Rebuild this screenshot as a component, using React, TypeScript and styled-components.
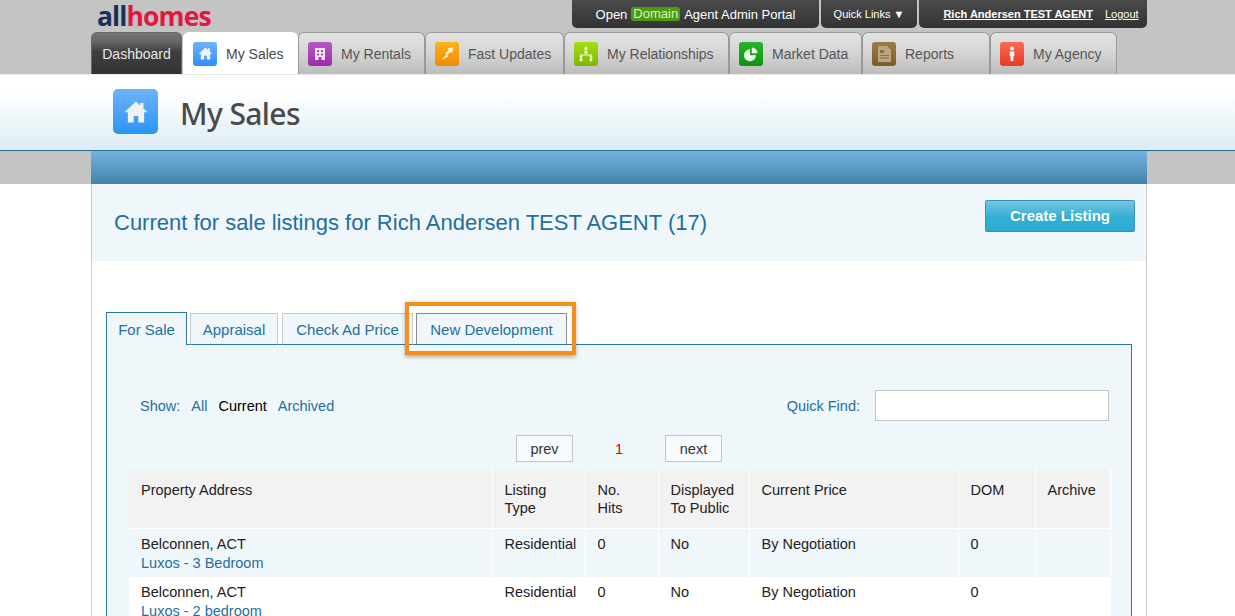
// App.tsx
import React from "react";
import styled, { createGlobalStyle } from "styled-components";

const GlobalStyle = createGlobalStyle`
  html, body {
    margin: 0;
    padding: 0;
    height: 616px;
    overflow: hidden;
    background: #fff;
    font-family: "Liberation Sans", Arial, sans-serif;
  }
  * { box-sizing: border-box; }
`;

const TopBand = styled.div`
  background: #c4c4c4;
  height: 75px;
  padding-left: 91px;
  border-bottom: 1px solid #eaeaea;
`;

const Shell = styled.div`
  width: 1056px;
`;

const TopRow = styled.div`
  display: flex;
  justify-content: space-between;
  height: 32px;
`;

const Logo = styled.div`
  margin-left: 6px;
  font-family: "Open Sans", sans-serif;
  font-weight: 700;
  font-size: 26.5px;
  line-height: 33px;
  letter-spacing: -0.9px;
  color: #e3173e;
  span {
    color: #1c2f5c;
  }
`;

const TopBars = styled.div`
  display: flex;
  gap: 2px;
  height: 28px;
`;

const TopBar = styled.div<{ $width: number }>`
  width: ${(p) => p.$width}px;
  display: flex;
  align-items: center;
  justify-content: center;
  gap: 4px;
  color: #fff;
  font-size: 13px;
  background: linear-gradient(#4a4a4a, #333);
  border-radius: 0 0 5px 5px;
  white-space: nowrap;
`;

const DomainMark = styled.span`
  background: #4f9a13;
  color: #d8f5b8;
  padding: 0 2px;
  border-radius: 3px;
  line-height: 14px;
`;

const UserName = styled.a`
  font-size: 11px;
  font-weight: 700;
  color: #fff;
  text-decoration: underline;
  margin-left: 16px;
`;

const Logout = styled.a`
  font-size: 11px;
  color: #fff;
  text-decoration: underline;
  margin-left: 8px;
`;

const NavRow = styled.nav`
  display: flex;
  height: 42px;
`;

const NavTab = styled.a<{ $width: number; $variant?: "dark" | "active" }>`
  width: ${(p) => p.$width}px;
  display: flex;
  align-items: center;
  justify-content: ${(p) => (p.$variant === "dark" ? "center" : "flex-start")};
  gap: 9px;
  padding-left: ${(p) => (p.$variant === "dark" ? 0 : 9)}px;
  font-size: 14px;
  border-radius: 6px 6px 0 0;
  color: ${(p) => (p.$variant === "dark" ? "#e8e8e8" : p.$variant === "active" ? "#4a4a4a" : "#555")};
  border: 1px solid ${(p) => (p.$variant === "dark" ? "#666" : p.$variant === "active" ? "#fff" : "#9a9a9a")};
  border-bottom: none;
  margin-right: ${(p) => (p.$variant === "dark" ? 1 : 0)}px;
  background: ${(p) =>
    p.$variant === "dark"
      ? "linear-gradient(#747474, #666 22%, #3f3f3f 45%, #333)"
      : p.$variant === "active"
        ? "#fff"
        : "linear-gradient(#e3e3e3, #d6d6d6 45%, #bdbdbd)"};
`;

const IconTile = styled.span<{ $from: string; $to: string; $size?: number }>`
  flex: none;
  display: flex;
  align-items: center;
  justify-content: center;
  width: ${(p) => p.$size ?? 24}px;
  height: ${(p) => p.$size ?? 24}px;
  border-radius: ${(p) => ((p.$size ?? 24) > 30 ? 5 : 3)}px;
  background: linear-gradient(${(p) => p.$from}, ${(p) => p.$to});
`;

const HomeIcon = ({ size }: { size: number }) => (
  <svg width={size} height={size} viewBox="0 0 16 16" fill="#f1f1f1">
    <path d="M8 1.5 0.8 8.2h2.2V14.5h3.6v-4h2.8v4H13V8.2h2.2L12.6 5.8V2.5h-2v1.5z" />
  </svg>
);

const Header = styled.header`
  height: 76px;
  padding: 14px 0 0 113px;
  display: flex;
  gap: 22px;
  background: linear-gradient(#fff 25%, #dcebf5);
  border-bottom: 1px solid #256a9c;
`;

const PageHeading = styled.h1`
  margin: 0;
  font-family: "Noto Sans", sans-serif;
  font-size: 30px;
  line-height: 50px;
  font-weight: 500;
  letter-spacing: -0.6px;
  color: #4a4a4a;
`;

const BlueBand = styled.div`
  background: #c4c4c4;
  height: 33px;
  padding-left: 91px;
`;

const BlueStrip = styled(Shell)`
  height: 33px;
  background: linear-gradient(#74b3dc, #4283ac);
`;

const Card = styled(Shell)`
  margin-left: 91px;
  border: solid #ccc;
  border-width: 0 1px;
  height: 432px;
  overflow: hidden;
`;

const CardHead = styled.div`
  height: 77px;
  background: #f0f7fb;
  display: flex;
  align-items: center;
  justify-content: space-between;
  padding: 11px 11px 11px 22px;
`;

const CardTitle = styled.h2`
  margin: 0;
  font-size: 22px;
  font-weight: 400;
  color: #1f6f9f;
  white-space: nowrap;
`;

const CreateButton = styled.button`
  width: 150px;
  height: 32px;
  margin-top: -14px;
  border: 1px solid #3b8fc6;
  border-radius: 2px;
  background: linear-gradient(#78c6e0, #2fb0d3 55%, #2cadd1);
  color: #fff;
  font-family: inherit;
  font-size: 15px;
  font-weight: 700;
`;

const CardBody = styled.div`
  padding: 51px 14px 0;
`;

const TabsRow = styled.div`
  display: flex;
  align-items: flex-end;
  height: 33px;
  position: relative;
  z-index: 1;
`;

const ListTab = styled.a<{ $width: number; $gap?: number; $tone?: "active" | "hint" }>`
  width: ${(p) => p.$width}px;
  margin-right: ${(p) => p.$gap ?? 0}px;
  height: ${(p) => (p.$tone === "active" ? 33 : 32)}px;
  display: flex;
  align-items: center;
  justify-content: center;
  font-size: 15px;
  color: #1f6f9f;
  background: #f0f7fb;
  white-space: nowrap;
  border: 1px solid ${(p) => (p.$tone === "active" ? "#2a76a8" : p.$tone === "hint" ? "#8c8c8c" : "#c9c9c9")};
  border-bottom: ${(p) => (p.$tone === "active" ? "none" : "1px solid #2a76a8")};
`;

const Highlighted = styled.div`
  position: relative;
  display: flex;
`;

const OrangeBox = styled.span`
  position: absolute;
  left: -11px;
  right: -9px;
  top: -11px;
  bottom: -10px;
  border: 4px solid #f78d1a;
  box-shadow: 0 2px 4px rgba(0, 0, 0, 0.3);
  pointer-events: none;
`;

const Panel = styled.section`
  margin-top: -1px;
  height: 400px;
  background: #f0f7fb;
  border: 1px solid #2a76a8;
  padding: 45px 22px 0;
`;

const ShowRow = styled.div`
  display: flex;
  align-items: center;
  justify-content: space-between;
  height: 31px;
  padding-left: 11px;
`;

const ShowLinks = styled.div`
  display: flex;
  gap: 11px;
  font-size: 14.5px;
  color: #1f6f9f;
`;

const ShowLabel = styled.span`
  margin-right: 0;
`;

const ShowCurrent = styled.span`
  color: #000;
`;

const QuickFind = styled.label`
  display: flex;
  align-items: center;
  gap: 15px;
  font-size: 14.5px;
  color: #1f6f9f;
`;

const QuickInput = styled.input`
  width: 234px;
  height: 31px;
  border: 1px solid #c4c4c4;
  background: #fff;
`;

const Pager = styled.div`
  display: flex;
  justify-content: center;
  align-items: center;
  margin-top: 14px;
  height: 27px;
`;

const PagerButton = styled.a`
  width: 57px;
  height: 27px;
  display: flex;
  align-items: center;
  justify-content: center;
  border: 1px solid #c4c4c4;
  background: #f7fbfd;
  font-size: 14.5px;
  color: #333;
`;

const PageNumber = styled.span`
  width: 92px;
  text-align: center;
  font-size: 14.5px;
  color: #d80000;
`;

const Table = styled.table`
  width: 981px;
  margin-top: 7px;
  table-layout: fixed;
  border-collapse: collapse;
  font-size: 14.5px;
  color: #222;
`;

const HeadCell = styled.th`
  height: 59px;
  padding: 12px 11px 0 12px;
  vertical-align: top;
  text-align: left;
  font-weight: 400;
  line-height: 18px;
  background: #f2f2f2;
  border: 1px solid #fff;
  border-width: 0 1px 1px 0;
`;

const Row = styled.tr<{ $shaded?: boolean }>`
  background: ${(p) => (p.$shaded ? "#f0f7fb" : "#fff")};
`;

const Cell = styled.td`
  height: 49px;
  padding: 6px 5px 0 12px;
  vertical-align: top;
  line-height: 19px;
  border: 1px solid #fff;
  border-width: 0 1px 0 0;
  white-space: nowrap;
`;

const ProjectLink = styled.a`
  display: block;
  color: #1f6f9f;
`;

const columns = [363, 93, 73, 91, 209, 77, 75];
const heads: React.ReactNode[] = [
  "Property Address",
  <>Listing<br />Type</>,
  <>No.<br />Hits</>,
  <>Displayed<br />To Public</>,
  "Current Price",
  "DOM",
  "Archive",
];

const rows = [
  { project: "Luxos - 3 Bedroom", shaded: true },
  { project: "Luxos - 2 bedroom", shaded: false },
];

const navItems: { label: string; width: number; from: string; to: string; icon: React.ReactNode }[] = [
  {
    label: "My Rentals",
    width: 127,
    from: "#b558c4",
    to: "#9a2ea6",
    icon: (
      <svg width="16" height="16" viewBox="0 0 16 16" fill="#f3e6f5">
        <path d="M3 2h10v12H9.5v-3h-3v3H3zM5 4v2h2V4zm4 0v2h2V4zM5 7.500v2h2v-2zm4 0v2h2v-2z" fillRule="evenodd" />
      </svg>
    ),
  },
  {
    label: "Fast Updates",
    width: 139,
    from: "#ffb21a",
    to: "#ee8c00",
    icon: (
      <svg width="18" height="18" viewBox="0 0 18 18" fill="#fff6e0">
        <path d="M15.500 2 9.500 3.500l1.500 1.500-4 3.200 1.500 1.200L3 15.500l7.500-4.300-1.300-1.300 3.300-3 1.500 1.300z" />
      </svg>
    ),
  },
  {
    label: "My Relationships",
    width: 165,
    from: "#a7dc13",
    to: "#7cb800",
    icon: (
      <svg width="18" height="18" viewBox="0 0 18 18" fill="#f4fbd8">
        <circle cx="9" cy="3.500" r="1.700" />
        <path d="M7.500 5.800h3v3h-3z" />
        <path d="M3 9.500h12v1H3z" />
        <circle cx="4" cy="11.700" r="1.400" />
        <circle cx="14" cy="11.700" r="1.400" />
        <path d="M2.700 13.300h2.600v3H2.700zM12.700 13.300h2.600v3h-2.600z" />
      </svg>
    ),
  },
  {
    label: "Market Data",
    width: 133,
    from: "#27b52b",
    to: "#0c9414",
    icon: (
      <svg width="18" height="18" viewBox="0 0 18 18" fill="#f0fbf0">
        <path d="M8 4.200a6 6 0 1 0 6 6H8z" />
        <path d="M9.800 2.500a6 6 0 0 1 5.700 5.700H9.800z" />
      </svg>
    ),
  },
  {
    label: "Reports",
    width: 128,
    from: "#9a7a45",
    to: "#7d5c2b",
    icon: (
      <svg width="20" height="20" viewBox="0 0 20 20">
        <path d="M4 2h9l4 4v12H4z" fill="#bda67f" />
        <path d="M6 6h4v3H6zM6 11h9v1H6zM6 13.500h9v1H6z" fill="#8c6e40" />
      </svg>
    ),
  },
  {
    label: "My Agency",
    width: 127,
    from: "#fb6a55",
    to: "#e83a28",
    icon: (
      <svg width="16" height="18" viewBox="0 0 16 18" fill="#fff">
        <circle cx="8" cy="3.500" r="2" />
        <path d="M5.700 6.500h4.600v4.500H9.400v5H6.600v-5h-.9z" />
      </svg>
    ),
  },
];

const App: React.FC = () => {
  return (
    <>
      <GlobalStyle />
      <TopBand>
        <Shell>
          <TopRow>
            <Logo>
              <span>all</span>homes
            </Logo>
            <TopBars>
              <TopBar $width={247}>
                Open <DomainMark>Domain</DomainMark> Agent Admin Portal
              </TopBar>
              <TopBar $width={96} style={{ fontSize: 11 }}>
                Quick Links ▼
              </TopBar>
              <TopBar $width={228}>
                <UserName>Rich Andersen TEST AGENT</UserName>
                <Logout>Logout</Logout>
              </TopBar>
            </TopBars>
          </TopRow>
          <NavRow>
            <NavTab $width={91} $variant="dark">Dashboard</NavTab>
            <NavTab $width={115} $variant="active">
              <IconTile $from="#6fb2ff" $to="#2f8dfb">
                <HomeIcon size={15} />
              </IconTile>
              My Sales
            </NavTab>
            {navItems.map((item) => (
              <NavTab key={item.label} $width={item.width}>
                <IconTile $from={item.from} $to={item.to}>
                  {item.icon}
                </IconTile>
                {item.label}
              </NavTab>
            ))}
          </NavRow>
        </Shell>
      </TopBand>
      <Header>
        <IconTile $from="#6cb2fb" $to="#2a95f6" $size={45}>
          <HomeIcon size={26} />
        </IconTile>
        <PageHeading>My Sales</PageHeading>
      </Header>
      <BlueBand>
        <BlueStrip />
      </BlueBand>
      <Card>
        <CardHead>
          <CardTitle>Current for sale listings for Rich Andersen TEST AGENT (17)</CardTitle>
          <CreateButton>Create Listing</CreateButton>
        </CardHead>
        <CardBody>
          <TabsRow>
            <ListTab $width={81} $gap={3} $tone="active">For Sale</ListTab>
            <ListTab $width={88} $gap={4}>Appraisal</ListTab>
            <ListTab $width={131} $gap={3}>Check Ad Price</ListTab>
            <Highlighted>
              <ListTab $width={151} $tone="hint">New Development</ListTab>
              <OrangeBox />
            </Highlighted>
          </TabsRow>
          <Panel>
            <ShowRow>
              <ShowLinks>
                <ShowLabel>Show:</ShowLabel>
                <a>All</a>
                <ShowCurrent>Current</ShowCurrent>
                <a>Archived</a>
              </ShowLinks>
              <QuickFind>
                Quick Find:
                <QuickInput />
              </QuickFind>
            </ShowRow>
            <Pager>
              <PagerButton>prev</PagerButton>
              <PageNumber>1</PageNumber>
              <PagerButton>next</PagerButton>
            </Pager>
            <Table>
              <colgroup>
                {columns.map((w, i) => (
                  <col key={i} style={{ width: w }} />
                ))}
              </colgroup>
              <thead>
                <tr>
                  {heads.map((h, i) => (
                    <HeadCell key={i}>{h}</HeadCell>
                  ))}
                </tr>
              </thead>
              <tbody>
                {rows.map((r) => (
                  <Row key={r.project} $shaded={r.shaded}>
                    <Cell>
                      Belconnen, ACT
                      <ProjectLink>{r.project}</ProjectLink>
                    </Cell>
                    <Cell>Residential</Cell>
                    <Cell>0</Cell>
                    <Cell>No</Cell>
                    <Cell>By Negotiation</Cell>
                    <Cell>0</Cell>
                    <Cell />
                  </Row>
                ))}
              </tbody>
            </Table>
          </Panel>
        </CardBody>
      </Card>
    </>
  );
};

export default App;
